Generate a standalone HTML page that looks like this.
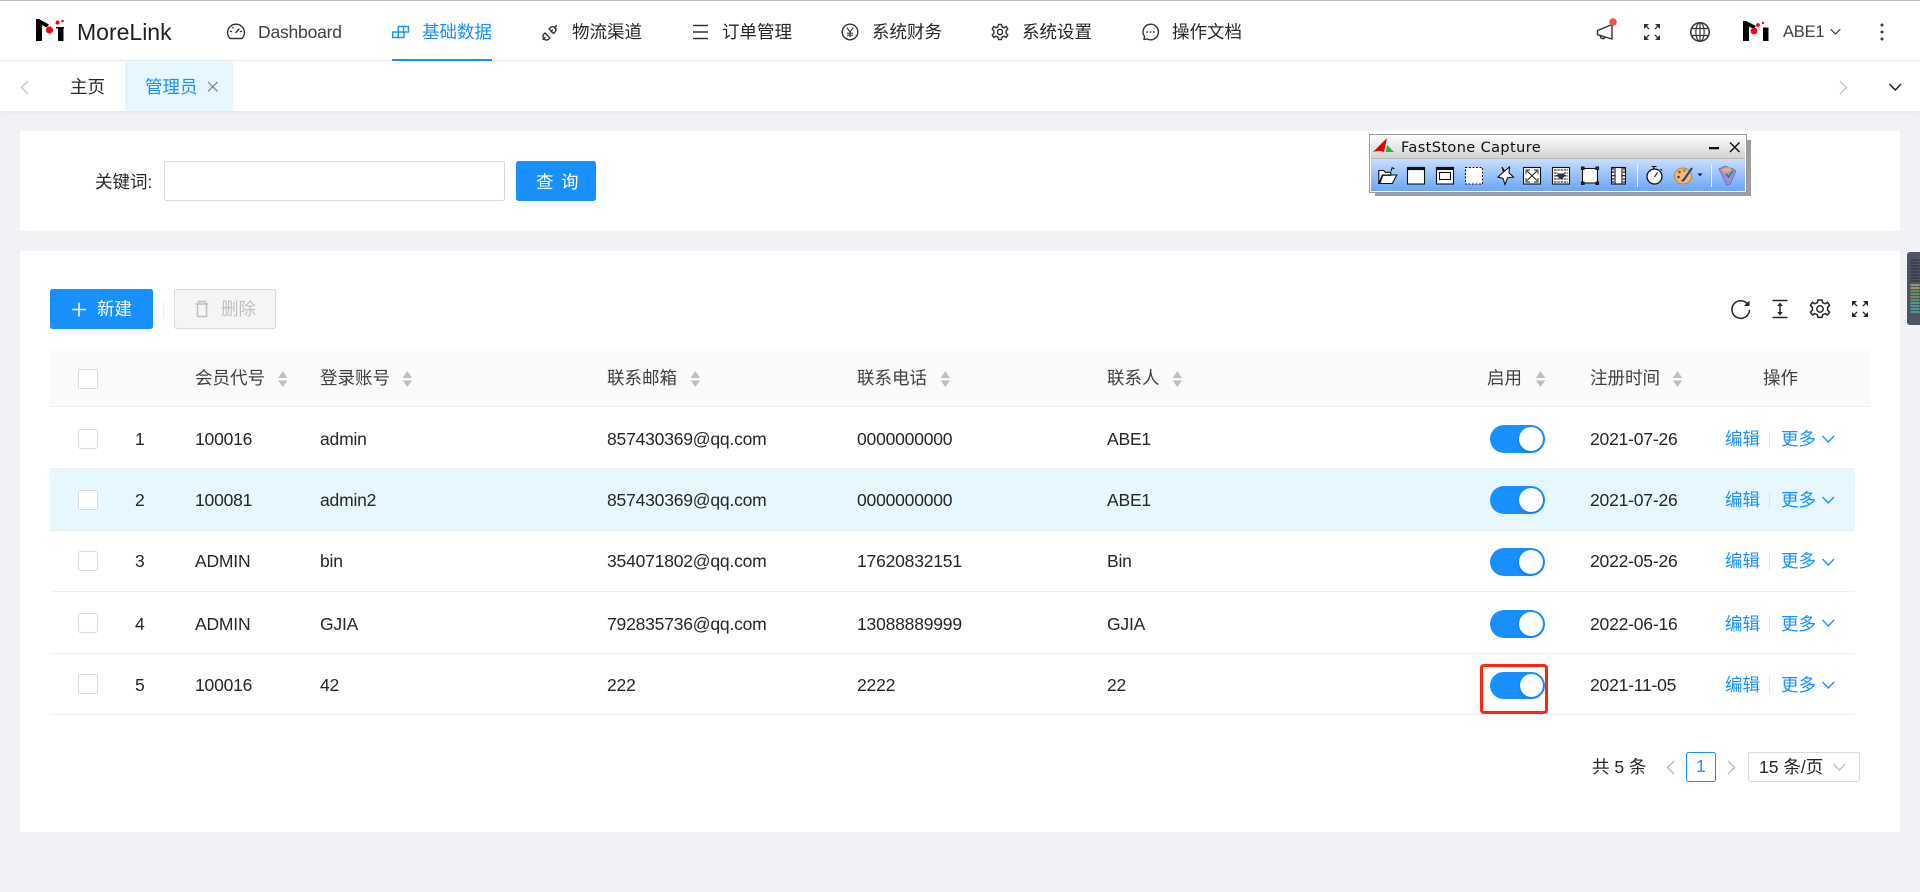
<!DOCTYPE html>
<html lang="zh-CN">
<head>
<meta charset="utf-8">
<title>MoreLink</title>
<style>
html,body{margin:0;padding:0;width:1920px;height:892px;overflow:hidden;background:#f0f2f5;}
body{position:relative;font-family:"Liberation Sans","Noto Sans CJK SC",sans-serif;font-size:17.5px;color:#262626;}
.b{position:absolute;box-sizing:border-box;}
.t{position:absolute;white-space:nowrap;line-height:24px;height:24px;letter-spacing:-.2px;}
.h{color:#404040;letter-spacing:0;}
.l{color:#1890ff;letter-spacing:0;}
.z{letter-spacing:0;}
.line{position:absolute;left:50px;width:1805px;height:1px;background:#eeeeee;}
.cb{position:absolute;left:78px;width:20px;height:20px;box-sizing:border-box;background:#fff;border:1px solid #d9d9d9;border-radius:2.5px;}
.sw{position:absolute;left:1490px;width:55px;height:28px;border-radius:14px;background:#1890ff;}
.sw i{position:absolute;right:2px;top:2px;width:24px;height:24px;border-radius:50%;background:#fff;box-shadow:0 2px 4px rgba(0,35,11,.2);}
.sep{position:absolute;left:1769px;width:1px;height:17px;background:#e4e4e4;}
</style>
</head>
<body>
<!-- top bar -->
<div class="b" style="left:0;top:0;width:1920px;height:61px;background:#fff;border-top:1px solid #bdbdbd;border-bottom:1px solid #ececec;"></div>
<div class="b" style="left:0;top:61px;width:1920px;height:50px;background:#fff;box-shadow:0 1px 5px rgba(0,21,41,.06);"></div>

<div class="t z" style="left:77px;top:20px;font-size:23px;color:#1f1f1f;">MoreLink</div>
<div class="t" style="left:258px;top:20px;color:#404040;letter-spacing:-.2px;">Dashboard</div>
<div class="t l" style="left:422px;top:20px;">基础数据</div>
<div class="b" style="left:392px;top:59px;width:100px;height:2px;background:#1890ff;"></div>
<div class="t z" style="left:572px;top:20px;">物流渠道</div>
<div class="t z" style="left:722px;top:20px;">订单管理</div>
<div class="t z" style="left:872px;top:20px;">系统财务</div>
<div class="t z" style="left:1022px;top:20px;">系统设置</div>
<div class="t z" style="left:1172px;top:20px;">操作文档</div>
<div class="t" style="left:1783px;top:20px;color:#404040;font-size:16.5px;">ABE1</div>

<!-- tabs -->
<div class="t z" style="left:70px;top:75px;">主页</div>
<div class="b" style="left:125px;top:61px;width:108px;height:50px;background:#e6f7ff;"></div>
<div class="t l" style="left:145px;top:75px;">管理员</div>

<!-- search card -->
<div class="b" style="left:20px;top:131px;width:1880px;height:100px;background:#fff;border-radius:2px;"></div>
<div class="t z" style="left:95px;top:170px;">关键词:</div>
<div class="b" style="left:164px;top:161px;width:341px;height:40px;background:#fff;border:1px solid #d9d9d9;border-radius:2.5px;"></div>
<div class="b" style="left:516px;top:161px;width:80px;height:40px;background:#1890ff;border-radius:2.5px;"></div>
<div class="t" style="left:536px;top:170px;color:#fff;letter-spacing:7.5px;">查询</div>

<!-- table card -->
<div class="b" style="left:20px;top:251px;width:1880px;height:581px;background:#fff;border-radius:2px;"></div>
<div class="b" style="left:50px;top:289px;width:103px;height:40px;background:#1890ff;border-radius:2.5px;"></div>
<div class="t z" style="left:97px;top:297px;color:#fff;">新建</div>
<div class="b" style="left:163px;top:302px;width:1px;height:16px;background:#eee;"></div>
<div class="b" style="left:174px;top:289px;width:102px;height:40px;background:#f5f5f5;border:1px solid #d9d9d9;border-radius:2.5px;"></div>
<div class="t z" style="left:221px;top:297px;color:#bfbfbf;">删除</div>

<!-- table header -->
<div class="b" style="left:50px;top:349px;width:1820px;height:58px;background:#fafafa;border-bottom:1px solid #efefef;"></div>
<div class="cb" style="top:369px;"></div>
<div class="t h" style="left:195px;top:366px;">会员代号</div>
<div class="t h" style="left:320px;top:366px;">登录账号</div>
<div class="t h" style="left:607px;top:366px;">联系邮箱</div>
<div class="t h" style="left:857px;top:366px;">联系电话</div>
<div class="t h" style="left:1107px;top:366px;">联系人</div>
<div class="t h" style="left:1487px;top:366px;">启用</div>
<div class="t h" style="left:1590px;top:366px;">注册时间</div>
<div class="t h" style="left:1763px;top:366px;">操作</div>

<!-- rows -->
<div class="b" style="left:50px;top:468px;width:1805px;height:63px;background:#e6f7ff;"></div>
<div class="line" style="top:468px;"></div>
<div class="line" style="top:530px;"></div>
<div class="line" style="top:591px;"></div>
<div class="line" style="top:653px;"></div>
<div class="line" style="top:714px;"></div>

<div class="cb" style="top:429px;"></div>
<div class="t" style="left:135px;top:427px;">1</div>
<div class="t" style="left:195px;top:427px;">100016</div>
<div class="t" style="left:320px;top:427px;">admin</div>
<div class="t" style="left:607px;top:427px;">857430369@qq.com</div>
<div class="t" style="left:857px;top:427px;">0000000000</div>
<div class="t" style="left:1107px;top:427px;">ABE1</div>
<div class="sw" style="top:425px;"><i></i></div>
<div class="t" style="left:1590px;top:427px;">2021-07-26</div>
<div class="t l" style="left:1725px;top:427px;">编辑</div>
<div class="sep" style="top:431px;"></div>
<div class="t l" style="left:1781px;top:427px;">更多</div>

<div class="cb" style="top:490px;"></div>
<div class="t" style="left:135px;top:488px;">2</div>
<div class="t" style="left:195px;top:488px;">100081</div>
<div class="t" style="left:320px;top:488px;">admin2</div>
<div class="t" style="left:607px;top:488px;">857430369@qq.com</div>
<div class="t" style="left:857px;top:488px;">0000000000</div>
<div class="t" style="left:1107px;top:488px;">ABE1</div>
<div class="sw" style="top:486px;"><i></i></div>
<div class="t" style="left:1590px;top:488px;">2021-07-26</div>
<div class="t l" style="left:1725px;top:488px;">编辑</div>
<div class="sep" style="top:492px;"></div>
<div class="t l" style="left:1781px;top:488px;">更多</div>

<div class="cb" style="top:551px;"></div>
<div class="t" style="left:135px;top:549px;">3</div>
<div class="t" style="left:195px;top:549px;">ADMIN</div>
<div class="t" style="left:320px;top:549px;">bin</div>
<div class="t" style="left:607px;top:549px;">354071802@qq.com</div>
<div class="t" style="left:857px;top:549px;">17620832151</div>
<div class="t" style="left:1107px;top:549px;">Bin</div>
<div class="sw" style="top:548px;"><i></i></div>
<div class="t" style="left:1590px;top:549px;">2022-05-26</div>
<div class="t l" style="left:1725px;top:549px;">编辑</div>
<div class="sep" style="top:553px;"></div>
<div class="t l" style="left:1781px;top:549px;">更多</div>

<div class="cb" style="top:613px;"></div>
<div class="t" style="left:135px;top:612px;">4</div>
<div class="t" style="left:195px;top:612px;">ADMIN</div>
<div class="t" style="left:320px;top:612px;">GJIA</div>
<div class="t" style="left:607px;top:612px;">792835736@qq.com</div>
<div class="t" style="left:857px;top:612px;">13088889999</div>
<div class="t" style="left:1107px;top:612px;">GJIA</div>
<div class="sw" style="top:610px;"><i></i></div>
<div class="t" style="left:1590px;top:612px;">2022-06-16</div>
<div class="t l" style="left:1725px;top:612px;">编辑</div>
<div class="sep" style="top:615px;"></div>
<div class="t l" style="left:1781px;top:612px;">更多</div>

<div class="cb" style="top:674px;"></div>
<div class="t" style="left:135px;top:673px;">5</div>
<div class="t" style="left:195px;top:673px;">100016</div>
<div class="t" style="left:320px;top:673px;">42</div>
<div class="t" style="left:607px;top:673px;">222</div>
<div class="t" style="left:857px;top:673px;">2222</div>
<div class="t" style="left:1107px;top:673px;">22</div>
<div class="sw" style="top:672px;height:27px;"><i style="height:23px;width:23px;"></i></div>
<div class="t" style="left:1590px;top:673px;">2021-11-05</div>
<div class="t l" style="left:1725px;top:673px;">编辑</div>
<div class="sep" style="top:676px;"></div>
<div class="t l" style="left:1781px;top:673px;">更多</div>

<!-- red annotation -->
<div class="b" style="left:1480px;top:664px;width:68px;height:50px;border:3.5px solid #ff2418;border-radius:4px;"></div>

<!-- pagination -->
<div class="t z" style="left:1592px;top:755px;">共 5 条</div>
<div class="b" style="left:1686px;top:752px;width:30px;height:30px;background:#fff;border:1px solid #1890ff;border-radius:2.5px;"></div>
<div class="t z" style="left:1696px;top:754px;color:#1890ff;">1</div>
<div class="b" style="left:1748px;top:752px;width:112px;height:30px;background:#fff;border:1px solid #d9d9d9;border-radius:2.5px;"></div>
<div class="t z" style="left:1759px;top:755px;">15 条/页</div>

<!-- all icons -->
<svg class="b" style="left:0;top:0;" width="1920" height="892" viewBox="0 0 1920 892" fill="none" xmlns="http://www.w3.org/2000/svg">
  <!-- logo -->
  <g>
    <path d="M36 19h3l10 5.500-2.500 3-4.500-2.500v16h-6z" fill="#000"/>
    <rect x="58" y="27" width="5.500" height="14" fill="#000"/>
    <rect x="56" y="27" width="8" height="1.500" fill="#000"/>
    <circle cx="49.500" cy="30" r="3.600" fill="#f5000f"/>
    <circle cx="57.500" cy="22.500" r="2" fill="#f5000f"/>
    <circle cx="62.500" cy="21" r="1.300" fill="#f5000f"/>
  </g>
  <g transform="translate(1707 0)">
    <path d="M36 21h3l10 5-2.500 3-4.500-2.500v14.500h-6z" fill="#000"/>
    <rect x="56" y="27.500" width="5.500" height="13.500" fill="#000"/>
    <circle cx="47" cy="31" r="3.400" fill="#f5000f"/>
    <circle cx="51" cy="25" r="1.900" fill="#f5000f"/>
    <circle cx="56" cy="23" r="1.200" fill="#f5000f"/>
  </g>

  <!-- nav icons -->
  <g stroke="#333" stroke-width="1.400" stroke-linecap="round" stroke-linejoin="round">
    <!-- dashboard -->
    <path d="M230 38.500a8.400 8.400 0 1 1 12 0z"/>
    <path d="M236 32.500l3-3.500" />
    <path d="M230.500 31.500h1M233 27.500v.5M240.500 31.500h1"/>
    <!-- plug -->
    <path d="M543 39.500l2-2M551 31.500l1.500-1.500M554.500 28l2-2.500"/>
    <path d="M545 33l5 5-1 1a3.200 3.200 0 0 1-5 -5zM549 29l1.500-1.500a3 3 0 0 1 4.500 4.500l-1.500 1.500z"/>
    <!-- menu -->
    <path d="M693 25.500h15M693 32h15M693 38.500h15" stroke-width="1.500" stroke-linecap="butt"/>
    <!-- yen -->
    <circle cx="850" cy="32" r="7.800"/>
    <path d="M847 27.800l3 4.200 3-4.200M850 32v4.700M847.500 33.200h5M847.500 35.200h5" stroke-width="1.100"/>
    <!-- gear -->
    <path d="M998.500 24.500h3l.6 2.300 2.100.9 2-1.200 1.600 2.700-1.700 1.600v2.400l1.700 1.600-1.600 2.700-2-1.200-2.100.9-.6 2.300h-3l-.6-2.300-2.100-.9-2 1.200-1.600-2.700 1.700-1.600v-2.400l-1.700-1.600 1.600-2.700 2 1.200 2.100-.9z"/>
    <circle cx="1000" cy="32" r="2.600"/>
    <!-- chat -->
    <path d="M1150.500 24.200a7.800 7.800 0 1 1-3.500 14.700l-3 .6.500-3a7.800 7.800 0 0 1 6-12.300z"/>
    <path d="M1147 32h.2M1150.400 32h.2M1153.800 32h.2" stroke-width="1.700"/>
  </g>
  <!-- blocks icon -->
  <path d="M392.700 32h11.300v5.500h-11.300zM398.300 32v5.500M398.300 32v-5.500h10.200v5.500h-4.500M403.500 26.500v5.500" stroke="#1890ff" stroke-width="1.400"/>

  <!-- right header icons -->
  <g stroke="#333" stroke-width="1.400" stroke-linecap="round" stroke-linejoin="round">
    <path d="M1597.500 30.500l14.500-6v14.500l-14.500-4.300zM1600.500 35.500v1a2.300 2.300 0 0 0 4.500.5"/>
    <path d="M1646 26l2.800 2.800M1658 26l-2.800 2.800M1646 38l2.800-2.800M1658 38l-2.800-2.800" stroke-width="1.300"/>
    <circle cx="1700" cy="32" r="9.200" stroke-width="1.500"/>
    <ellipse cx="1700" cy="32" rx="4.200" ry="9.200" stroke-width="1.200"/>
    <path d="M1700 23v18M1691.500 28.500h17M1691.500 35.500h17" stroke-width="1.200"/>
    <path d="M1831 29.500l4.500 4.500 4.500-4.500" stroke-width="1.200"/>
  </g>
  <path d="M1644 24h5l-5 5zM1660 24h-5l5 5zM1644 40h5l-5-5zM1660 40h-5l5-5z" fill="#333"/>
  <circle cx="1613" cy="22" r="3.800" fill="#ff4d4f"/>
  <circle cx="1882" cy="25" r="1.500" fill="#333"/>
  <circle cx="1882" cy="32" r="1.500" fill="#333"/>
  <circle cx="1882" cy="39" r="1.500" fill="#333"/>

  <!-- tab icons -->
  <path d="M28 81l-6.500 6.500 6.500 6.500" stroke="#c4c4c4" stroke-width="1.300"/>
  <path d="M208 82l9.500 9.500M217.500 82l-9.500 9.500" stroke="#8c8c8c" stroke-width="1.400"/>
  <path d="M1840 81l6.500 6.500-6.500 6.500" stroke="#c4c4c4" stroke-width="1.300"/>
  <path d="M1889.500 84l5.800 6 5.700-6" stroke="#262626" stroke-width="1.500"/>

  <!-- plus + trash -->
  <path d="M79 302.500v14M72 309.500h14" stroke="#fff" stroke-width="1.500"/>
  <path d="M195.500 304h13M198.500 303.500v-2h7v2M197.500 304v11.700a.8.8 0 0 0 .8.800h7.400a.8.8 0 0 0 .8-.800v-11.700" stroke="#bfbfbf" stroke-width="1.500"/>

  <!-- table tools -->
  <g stroke="#262626" stroke-width="1.500" stroke-linecap="round" stroke-linejoin="round">
    <path d="M1748 304.500a8.800 8.800 0 1 0 1.500 6" />
    <path d="M1780 305v8" />
    <path d="M1772.500 300.500h15M1772.500 317.500h15" stroke-linecap="butt"/>
    <path d="M1818 300h4l.7 2.700 2.500 1 2.400-1.400 2 3-2 2v2.800l2 2-2 3-2.400-1.400-2.500 1-.7 2.700h-4l-.7-2.700-2.500-1-2.400 1.400-2-3 2-2v-2.800l-2-2 2-3 2.400 1.400 2.500-1z"/>
    <circle cx="1820" cy="309" r="3.200"/>
    <path d="M1854 303l2.800 2.800M1866 303l-2.800 2.800M1854 315l2.800-2.800M1866 315l-2.800-2.800" stroke-width="1.300"/>
  </g>
  <path d="M1749.500 300.500v5.500h-5.500z" fill="#262626"/>
  <path d="M1780 302.500l2.800 3.500h-5.600zM1780 315.500l2.800-3.500h-5.600z" fill="#262626"/>
  <path d="M1852 301h5l-5 5zM1868 301h-5l5 5zM1852 317h5l-5-5zM1868 317h-5l5-5z" fill="#262626"/>

  <!-- sort carets -->
  <g fill="#bfbfbf">
    <path d="M282.800 371l4.700 7h-9.400zM282.800 387l-4.700-6.500h9.400z"/>
    <path d="M407.300 371l4.700 7h-9.400zM407.300 387l-4.700-6.500h9.400z"/>
    <path d="M695.300 371l4.700 7h-9.400zM695.300 387l-4.700-6.500h9.400z"/>
    <path d="M945.300 371l4.700 7h-9.400zM945.300 387l-4.700-6.500h9.400z"/>
    <path d="M1177.300 371l4.700 7h-9.400zM1177.300 387l-4.700-6.500h9.400z"/>
    <path d="M1540.500 371l4.700 7h-9.400zM1540.500 387l-4.700-6.500h9.400z"/>
    <path d="M1677.500 371l4.700 7h-9.400zM1677.500 387l-4.700-6.500h9.400z"/>
  </g>

  <!-- more chevrons -->
  <g stroke="#1890ff" stroke-width="1.300">
    <path d="M1822.500 436l5.800 6 5.700-6"/>
    <path d="M1822.500 497l5.800 6 5.700-6"/>
    <path d="M1822.500 559l5.800 6 5.700-6"/>
    <path d="M1822.500 620l5.800 6 5.700-6"/>
    <path d="M1822.500 682l5.800 6 5.700-6"/>
  </g>

  <!-- pagination chevrons -->
  <path d="M1674 761l-6.500 6.500 6.500 6.500" stroke="#bfbfbf" stroke-width="1.500"/>
  <path d="M1728 761l6.500 6.500-6.500 6.500" stroke="#bfbfbf" stroke-width="1.500"/>
  <path d="M1833.500 764l5.800 6 5.700-6" stroke="#bfbfbf" stroke-width="1.300"/>

  <!-- side meter -->
  <defs>
    <linearGradient id="fst" x1="0" y1="0" x2="0" y2="1">
      <stop offset="0" stop-color="#fbfbfb"/><stop offset="1" stop-color="#d2d4d4"/>
    </linearGradient>
    <linearGradient id="fsb" x1="0" y1="0" x2="0" y2="1">
      <stop offset="0" stop-color="#c8deff"/><stop offset="1" stop-color="#6ba5f6"/>
    </linearGradient>
  </defs>
  <path d="M1920 252h-10a3 3 0 0 0-3 3v67a3 3 0 0 0 3 3h10z" fill="#4d5564"/>
  <g stroke-width="1.300">
    <path d="M1910.500 260h9M1910.500 263h9M1910.500 266h9M1910.500 269h9M1910.500 272h9M1910.500 275h9M1910.500 278h9M1910.500 281h9" stroke="#33373f"/>
    <path d="M1910.500 285h9M1910.500 288h9" stroke="#c8c866"/>
    <path d="M1910.500 291h9M1910.500 294h9M1910.500 297h9M1910.500 300h9" stroke="#80a860"/>
    <path d="M1910.500 303h9M1910.500 306h9M1910.500 309h9M1910.500 312h9" stroke="#55c0a8"/>
  </g>

  <!-- FastStone window -->
  <rect x="1375" y="140" width="376" height="56" fill="#000" opacity=".38"/>
  <rect x="1369.500" y="134.500" width="377" height="58" fill="#fff" stroke="#9a9a9a"/>
  <rect x="1371" y="136" width="374" height="22" fill="url(#fst)"/>
  <rect x="1371" y="158" width="374" height="1" fill="#b8b8b8"/>
  <rect x="1371" y="159" width="374" height="32" fill="url(#fsb)"/>
  <path d="M1373 152l14-14-3 14c-4-1.500-7-1-11 0z" fill="#e8000b"/>
  <path d="M1387 145l7 7h-8z" fill="#12c424"/>
  <text x="1401" y="152" font-family="'DejaVu Sans',sans-serif" font-size="14.500" fill="#111" letter-spacing=".4">FastStone Capture</text>
  <rect x="1709" y="147" width="10" height="2.300" fill="#111"/>
  <path d="M1730 142.500l9.500 9.500M1739.500 142.500l-9.500 9.500" stroke="#111" stroke-width="1.500"/>
  <g stroke="#111" stroke-width="1.100" fill="#fff">
    <path d="M1378.800 183.500v-13h5l1.500 1.800h5.500v3h-8l-3 8.200zM1378.800 183.500l3.500-8.500h14.500l-4.500 8.500z"/>
    <path d="M1391 171l1.200-3.300 2.300 1" fill="none"/>
    <rect x="1407.500" y="167.500" width="17" height="16.500"/>
    <rect x="1407.500" y="167.500" width="17" height="2" fill="#111"/>
    <rect x="1436.500" y="167.500" width="17" height="16.500"/>
    <rect x="1436.500" y="167.500" width="17" height="2" fill="#111"/>
    <rect x="1439.500" y="172.500" width="11" height="7"/>
    <rect x="1465.500" y="167.500" width="17" height="16.500" stroke-dasharray="2 1.500"/>
    <path d="M1502 167l2.500 4 5-4-.5 6 4.500 4-6 1-2.500 6.500-2-6-5-1.500 5.500-5z"/>
    <rect x="1523.500" y="167.500" width="17" height="16.500"/>
    <path d="M1527 171l10 9.500M1537 171l-10 9.500M1526 174v-4h4M1538 174v-4h-4M1526 178v4h4M1538 178v4h-4" fill="none" stroke-width=".9"/>
    <rect x="1552.500" y="167.500" width="17" height="16.500"/>
    <path d="M1554 170h14M1554 173h4M1564 173h4M1554 176h4M1564 176h4M1554 179h14M1554 182h14" fill="none" stroke-dasharray="2.500 .8"/>
    <path d="M1557.500 173.500h7v1.500h2l-5.500 4.500-5.500-4.500h2z" fill="#333" stroke="none"/>
    <rect x="1582.500" y="168.500" width="15" height="14.500"/>
    <path d="M1581.500 167h2.500v2.500h-2.500zM1596 167h2.500v2.500h-2.500zM1581.500 182h2.500v2.500h-2.500zM1596 182h2.500v2.500h-2.500z" fill="#333"/>
    <rect x="1611.500" y="167.500" width="14" height="16.500"/>
    <path d="M1615 168v16M1622 168v16M1611.500 175.700h3.500M1622 175.700h3.500" fill="none"/>
    <path d="M1612 169h2M1612 172h2M1612 179h2M1612 182h2M1623 169h2M1623 172h2M1623 179h2M1623 182h2" stroke-width="1.300" fill="none"/>
    <circle cx="1654.500" cy="176.500" r="7.500" stroke-width="1.300"/>
    <path d="M1651.500 166.500h5M1654 166.500v2.500M1660.500 169l1.500 1.500M1654.500 177l3-4.500" fill="none"/>
  </g>
  <ellipse cx="1683" cy="176" rx="8.500" ry="8" fill="#f2bd64" stroke="#a77930" stroke-width=".7"/>
  <circle cx="1679.500" cy="172" r="1.300" fill="#d22"/>
  <circle cx="1684.500" cy="170.500" r="1.300" fill="#2a8"/>
  <circle cx="1678.500" cy="177" r="1.300" fill="#33c"/>
  <circle cx="1682.500" cy="180.500" r="1.300" fill="#c3c"/>
  <path d="M1683 181l9-13" stroke="#2833b8" stroke-width="2"/>
  <path d="M1697.500 173.500h5l-2.500 2.800z" fill="#111"/>
  <rect x="1637" y="164" width="1" height="23" fill="#eaf3ff"/>
  <rect x="1711" y="164" width="1" height="23" fill="#eaf3ff"/>
  <path d="M1719 169l6-3 8 3 3 2-6 13-3 1.500z" fill="#9d8fdc" stroke="#6d62aa" stroke-width=".7"/>
  <path d="M1721 169.500l8-2.500 3 3-7 3z" fill="#e8b070"/>
  <path d="M1726 174l2.500 3 4.500-6" stroke="#1a8a4a" stroke-width="1.400"/>
</svg>
</body>
</html>
